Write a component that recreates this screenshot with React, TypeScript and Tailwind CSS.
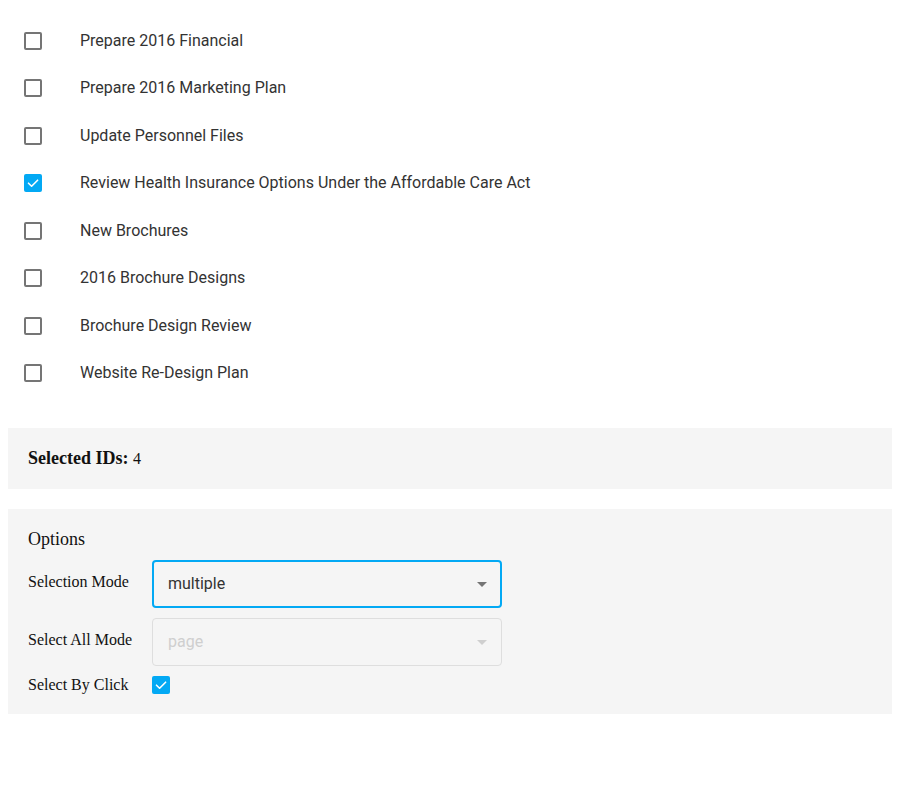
import React from "react";

const tasks = [
  { id: 1, text: "Prepare 2016 Financial", checked: false },
  { id: 2, text: "Prepare 2016 Marketing Plan", checked: false },
  { id: 3, text: "Update Personnel Files", checked: false },
  { id: 4, text: "Review Health Insurance Options Under the Affordable Care Act", checked: true },
  { id: 5, text: "New Brochures", checked: false },
  { id: 6, text: "2016 Brochure Designs", checked: false },
  { id: 7, text: "Brochure Design Review", checked: false },
  { id: 8, text: "Website Re-Design Plan", checked: false },
];

function CheckBox({ checked }: { checked: boolean }) {
  if (checked) {
    return (
      <span className="flex h-[18px] w-[18px] shrink-0 items-center justify-center rounded-[2px] bg-[#03a9f4]">
        <svg width="18" height="18" viewBox="0 0 18 18" fill="none">
          <path d="M4.5 9.2 L7.6 12.2 L13.6 6.2" stroke="#fff" strokeWidth="1.6" strokeLinecap="round" strokeLinejoin="round" />
        </svg>
      </span>
    );
  }
  return <span className="block h-[18px] w-[18px] shrink-0 rounded-[2px] border-2 border-[#757575]" />;
}

function SelectBox({ value, focused, disabled }: { value: string; focused?: boolean; disabled?: boolean }) {
  return (
    <div
      className={
        focused
          ? "flex h-[48px] w-[350px] items-center justify-between rounded-[4px] border-2 border-[#03a9f4] pl-[14px] pr-[13px] font-['Roboto',sans-serif]"
          : "flex h-[48px] w-[350px] items-center justify-between rounded-[4px] border border-[#dedede] pl-[15px] pr-[14px] font-['Roboto',sans-serif]"
      }
    >
      <span className={disabled ? "text-[16px] text-[#cfcfcf]" : "text-[16px] text-[#333]"}>{value}</span>
      <svg width="10" height="5" viewBox="0 0 10 5">
        <path d="M0 0 L10 0 L5 5 Z" fill={disabled ? "#cfcfcf" : "#757575"} />
      </svg>
    </div>
  );
}

export default function App() {
  return (
    <div className="min-h-[800px] bg-white font-['Roboto',sans-serif]">
      <div className="pt-[17px]">
        {tasks.map((t) => (
          <div key={t.id} className="flex h-[47.5px] items-center gap-[38px] pl-6">
            <CheckBox checked={t.checked} />
            <span className="text-[16px] text-[#333]">{t.text}</span>
          </div>
        ))}
      </div>

      <div className="mx-2 mt-[31px] bg-[#f5f5f5] p-5 font-['Liberation_Serif',serif] text-[18px] leading-[21px] text-[#111]">
        <b>Selected IDs:</b> <span className="text-[16px]">4</span>
      </div>

      <div className="mx-2 mt-5 flex flex-col gap-[10px] bg-[#f5f5f5] p-5 font-['Liberation_Serif',serif] text-[#111]">
        <div className="text-[18px] leading-[21px]">Options</div>
        <div className="flex items-center">
          <span className="mb-1 w-[124px] text-[16px]">Selection Mode</span>
          <SelectBox value="multiple" focused />
        </div>
        <div className="flex items-center">
          <span className="mb-1 w-[124px] text-[16px]">Select All Mode</span>
          <SelectBox value="page" disabled />
        </div>
        <div className="flex h-[18px] items-center">
          <span className="w-[124px] text-[16px]">Select By Click</span>
          <CheckBox checked />
        </div>
      </div>
    </div>
  );
}
